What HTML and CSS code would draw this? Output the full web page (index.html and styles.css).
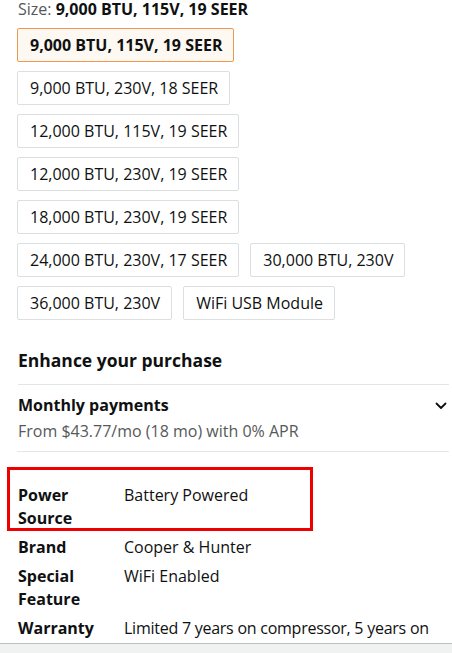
FILE: index.html
```html
<!DOCTYPE html>
<html>
<head>
<meta charset="utf-8">
<link rel="stylesheet" href="styles.css">
</head>
<body>
<div class="page">
  <div class="size-line"><span class="size-label">Size: </span><span class="size-value">9,000 BTU, 115V, 19 SEER</span></div>
  <div class="options">
    <div class="opt selected">9,000 BTU, 115V, 19 SEER</div>
    <div class="opt">9,000 BTU, 230V, 18 SEER</div>
    <div class="opt">12,000 BTU, 115V, 19 SEER</div>
    <div class="opt">12,000 BTU, 230V, 19 SEER</div>
    <div class="opt">18,000 BTU, 230V, 19 SEER</div>
    <div class="opt">24,000 BTU, 230V, 17 SEER</div>
    <div class="opt">30,000 BTU, 230V</div>
    <div class="opt">36,000 BTU, 230V</div>
    <div class="opt">WiFi USB Module</div>
  </div>
  <h2 class="enhance">Enhance your purchase</h2>
  <div class="monthly">
    <div class="monthly-text">
      <div class="monthly-title">Monthly payments</div>
      <div class="monthly-sub">From $43.77/mo (18 mo) with 0% APR</div>
    </div>
    <svg class="chev" width="12" height="8" viewBox="0 0 12 8"><path d="M1.5 1.5 L6 6 L10.5 1.5" fill="none" stroke="#0f1111" stroke-width="1.8" stroke-linecap="round" stroke-linejoin="round"/></svg>
  </div>
  <div class="specs">
    <div class="row highlight"><div class="k">Power Source</div><div class="v">Battery Powered</div></div>
    <div class="row"><div class="k">Brand</div><div class="v">Cooper &amp; Hunter</div></div>
    <div class="row"><div class="k">Special Feature</div><div class="v">WiFi Enabled</div></div>
    <div class="row"><div class="k">Warranty</div><div class="v warranty">Limited 7 years on compressor, 5 years on</div></div>
  </div>
</div>
<div class="bottom-bar"></div>
</body>
</html>
```
FILE: styles.css
```css
html, body {
  margin: 0;
  padding: 0;
  background: #fff;
}
body {
  font-family: "Open Sans", "Noto Sans", Arial, sans-serif;
  color: #0f1111;
  font-size: 16px;
  overflow: hidden;
  height: 653px;
  position: relative;
}
.page {
  padding: 0 3px 0 17px;
}
.size-line {
  margin-top: -2px;
  line-height: 22px;
  padding-left: 1px;
}
.size-label { color: #565959; }
.size-value { font-weight: 700; }
.options {
  display: flex;
  flex-wrap: wrap;
  gap: 9px 11px;
  margin-top: 8px;
  width: 420px;
}
.opt {
  box-sizing: border-box;
  height: 34px;
  border: 1px solid #dcdfdf;
  border-radius: 2px;
  padding: 0 11px 0 12px;
  line-height: 32px;
  white-space: nowrap;
  background: #fff;
}
.opt.selected {
  border-color: #e99a50;
  background: #fef8f2;
  font-weight: 700;
}
.options .opt:nth-child(1),
.options .opt:nth-child(2),
.options .opt:nth-child(3),
.options .opt:nth-child(4),
.options .opt:nth-child(5) {
  margin-right: 200px;
}
.enhance {
  font-size: 17.5px;
  font-weight: 700;
  margin: 24px 0 0 1px;
  line-height: 32px;
  padding-bottom: 8px;
  border-bottom: 1px solid #e3e6e6;
}
.monthly {
  display: flex;
  justify-content: space-between;
  align-items: flex-start;
  padding: 8px 0 6px 1px;
  border-bottom: 1px solid #e3e6e6;
}
.monthly-title {
  font-weight: 700;
  line-height: 24px;
}
.monthly-sub {
  color: #565959;
  line-height: 28px;
}
.chev {
  margin-top: 9px;
  margin-right: 2px;
}
.specs {
  margin-top: 29px;
  padding-left: 1px;
}
.row {
  display: grid;
  grid-template-columns: 106px 1fr;
  line-height: 23px;
  padding: 3px 0;
  white-space: nowrap;
}
.row.highlight {
  position: relative;
}
.row.highlight::after {
  content: "";
  position: absolute;
  left: -11px;
  top: -14px;
  width: 300px;
  height: 58px;
  border: 3px solid #e00;
}
.k {
  font-weight: 700;
  width: 70px;
  white-space: normal;
}
.warranty {
  letter-spacing: -0.25px;
}
.bottom-bar {
  position: absolute;
  left: 0;
  right: 0;
  top: 643px;
  height: 10px;
  background: #f0f2f2;
  border-top: 1px solid #bbbfbf;
}
```
